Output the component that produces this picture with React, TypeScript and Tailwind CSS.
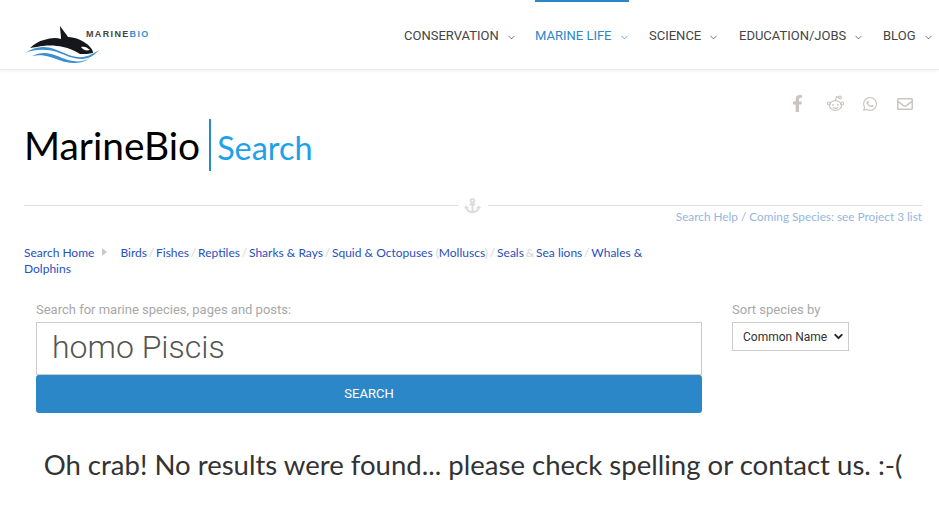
import { FaFacebookF, FaWhatsapp, FaRegEnvelope, FaAnchor } from "react-icons/fa";
import { ChevronDown } from "lucide-react";

const nav = [
  { label: "CONSERVATION", w: "w-[111px] mr-[20px]" },
  { label: "MARINE LIFE", w: "w-[94px] mr-[20px]", active: true },
  { label: "SCIENCE", w: "w-[70px] mr-[20px]" },
  { label: "EDUCATION/JOBS", w: "w-[124px] mr-[20px]" },
  { label: "BLOG", w: "w-[52px]" },
];

function Logo() {
  return (
    <div className="relative w-[130px] h-[69px] ml-[25px] shrink-0">
      <svg className="absolute left-0 top-[24px]" width="76" height="40" viewBox="0 0 76 40">
        <path d="M5 24 C9 20 14 17 19 16 C25 14 31 13 36 15 C36 10 35 6 35 2 C38 6 41 10 43 13 C50 13 60 17 65 23 C67 25 68 27 68 29 C64 30 59 30 55 30 C50 27 44 24 38 23 C30 21 20 21 12 23 C9 23 7 24 5 24 Z" fill="#15171a" />
        <path d="M56 23 C59 22 62 23 65 26 C61 27 58 26 56 23 Z" fill="#fff" />
        <path d="M0 29 C6 25 12 23 18 23 C28 23 36 28 44 31 C52 34 60 34 67 30 C70 29 72 27 74 26 C70 31 64 35 56 35 C48 35 40 31 32 28 C22 25 10 25 0 29 Z" fill="#3b8fd0" />
        <path d="M7 32 C13 29 20 28 26 30 C34 32 40 36 48 37 C54 38 60 37 65 34 C60 38 54 39 48 39 C40 39 32 35 25 33 C19 31 13 31 7 32 Z" fill="#3b8fd0" />
      </svg>
      <div className="absolute left-[61px] top-[29px] font-['Liberation_Sans',sans-serif] text-[9px] leading-[10px] font-bold tracking-[1.35px] text-[#444]">
        MARINE<span className="text-[#3b8fd0]">BIO</span>
      </div>
    </div>
  );
}

function RedditOutline() {
  return (
    <svg width="17" height="17" viewBox="0 0 17 17" fill="none" stroke="currentColor" strokeWidth="1.2">
      <ellipse cx="8.5" cy="10.5" rx="6" ry="4.8" />
      <circle cx="2" cy="8.5" r="1.5" />
      <circle cx="15" cy="8.5" r="1.5" />
      <circle cx="13" cy="2.5" r="1.3" />
      <path d="M8.5 5.7 L9.5 1.8 L12 2.3" />
      <circle cx="6" cy="9.8" r="0.9" fill="currentColor" stroke="none" />
      <circle cx="11" cy="9.8" r="0.9" fill="currentColor" stroke="none" />
      <path d="M6 12.6 C7.5 13.6 9.5 13.6 11 12.6" />
    </svg>
  );
}

function Sep({ children = "/" }: { children?: string }) {
  return <span className="text-[#d5d5d5] px-[1.8px]">{children}</span>;
}

function A({ children }: { children: string }) {
  return <span className="text-[#2650c0]">{children}</span>;
}

export default function App() {
  return (
    <div className="w-[939px] h-[507px] overflow-hidden bg-white font-['Lato',sans-serif]">
      <header className="h-[70px] flex justify-between border-b border-[#ececec] shadow-[0_1px_3px_rgba(0,0,0,0.06)]">
        <Logo />
        <nav className="flex pr-[4px] font-['Roboto',sans-serif] text-[13px]">
          {nav.map((n) => (
            <div
              key={n.label}
              className={`${n.w} h-[69px] flex items-start ${n.active ? "text-[#2b87c8] border-t-[2px] border-[#2b87c8] pt-[26px]" : "text-[#444] pt-[28px]"}`}
            >
              <span className="leading-[16px] whitespace-nowrap">{n.label}</span>
              <ChevronDown size={11} strokeWidth={1.6} className="ml-[7px] mt-[4px] shrink-0" />
            </div>
          ))}
        </nav>
      </header>

      <main className="pl-[24px] pr-[17px]">
        <div className="flex justify-end items-center h-[17px] mt-[25px] pr-[9px] text-[#c9c5c0]">
          <FaFacebookF size={17} className="mr-[21px]" />
          <RedditOutline />
          <FaWhatsapp size={16} className="ml-[18px] mr-[19px]" />
          <FaRegEnvelope size={16} />
        </div>

        <div className="flex items-center h-[52px] mt-[7px]">
          <span className="text-[38.9px] leading-[52px] text-black">MarineBio</span>
          <div className="w-[2px] h-[52px] bg-[#2b87c8] ml-[9px] mr-[6px]" />
          <span className="text-[32.4px] leading-[52px] text-[#1ea1e8] mt-[5px]">Search</span>
        </div>

        <div className="flex items-center mt-[24px] h-[20px] text-[#dedbd6]">
          <div className="w-[434px] h-px bg-[#dddddd]" />
          <FaAnchor size={17} className="mx-[6px]" />
          <div className="grow h-px bg-[#dddddd] ml-[1px]" />
        </div>
        <div className="text-right text-[11.8px] leading-[16px] text-[#95b5e0] -mt-[6px]">
          Search Help / Coming Species: see Project 3 list
        </div>

        <div className="w-[640px] mt-[20px] text-[12px] leading-[16px]">
          <A>Search Home</A>
          <span className="inline-block ml-[8px] mr-[13px] w-0 h-0 align-[1px] border-y-[4px] border-y-transparent border-l-[5px] border-l-[#c8c8c8]" />
          <A>Birds</A><Sep /><A>Fishes</A><Sep /><A>Reptiles</A><Sep /><A>Sharks &amp; Rays</A><Sep /><A>Squid &amp; Octopuses</A>
          <span className="text-[#d5d5d5] pl-[3px]">(</span><A>Molluscs</A><span className="text-[#d5d5d5]">)</span><Sep /><A>Seals</A>
          <Sep>&amp;</Sep><A>Sea lions</A><Sep /><A>Whales &amp;</A>
          <br />
          <A>Dolphins</A>
        </div>

        <div className="flex mt-[25px] ml-[12px] font-['Roboto',sans-serif]">
          <div className="w-[666px]">
            <label className="block text-[13px] leading-[16px] text-[#a8a8a8]">Search for marine species, pages and posts:</label>
            <div className="h-[53px] mt-[4px] border border-[#cccccc] pl-[15px] pb-[3px] flex items-center text-[32px] font-light text-[#555]">
              homo Piscis
            </div>
            <button className="block w-full h-[38px] rounded-[3px] bg-[#2b87c8] text-white text-[13px]">SEARCH</button>
          </div>
          <div className="ml-[30px]">
            <label className="block text-[13px] leading-[16px] text-[#a8a8a8]">Sort species by</label>
            <div className="mt-[4px] w-[117px] h-[29px] border border-[#cccccc] flex items-center justify-between pl-[10px] pr-[3px] text-[12px] text-[#333]">
              <span>Common Name</span>
              <ChevronDown size={13} strokeWidth={3.5} className="text-[#222]" />
            </div>
          </div>
        </div>

        <p className="mt-[33px] text-center text-[27.55px] leading-[38px] text-[#333] whitespace-nowrap">
          Oh crab! No results were found... please check spelling or contact us. :-(
        </p>
      </main>
    </div>
  );
}
